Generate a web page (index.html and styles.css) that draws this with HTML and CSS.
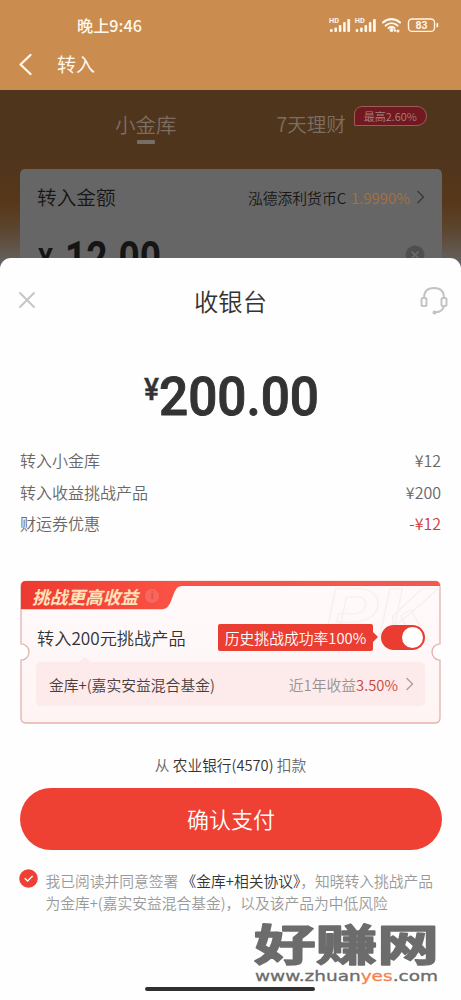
FILE: index.html
```
<!DOCTYPE html>
<html lang="zh-CN">
<head>
<meta charset="utf-8">
<title>收银台</title>
<link rel="stylesheet" href="styles.css">
</head>
<body>
<div class="screen">
  <header class="top">
    <div class="status">
      <span class="time">晚上9:46</span>
      <svg class="status-icons" width="112" height="20" viewBox="0 0 112 20">
        <g fill="#fff6ea">
          <g id="signal">
            <text x="1" y="8" class="hd" textLength="10" lengthAdjust="spacingAndGlyphs">HD</text>
            <rect x="2" y="14" width="2.6" height="3" rx="1"/>
            <rect x="6.4" y="12.4" width="2.6" height="4.6" rx="1"/>
            <rect x="10.8" y="10" width="2.6" height="7" rx="1"/>
            <rect x="15.1" y="7" width="2.6" height="10" rx="1"/>
            <rect x="19.3" y="4" width="2.8" height="13" rx="1"/>
          </g>
          <use href="#signal" x="25.7"/>
          <circle cx="63.5" cy="15" r="2"/>
          <circle cx="67" cy="15.500" r="1.300"/>
          <circle cx="70" cy="16" r="1.500"/>
        </g>
        <g fill="none" stroke="#fff6ea" stroke-width="2.2" stroke-linecap="round">
          <path d="M55 7.5c5-4.600 12-4.600 17 0M57.700 10.500c3.500-3 8.300-3 11.800 0M60.600 13c1.800-1.400 4-1.400 5.800 0"/>
          <rect x="80.500" y="4" width="26" height="12.400" rx="3.500" stroke-width="1.400"/>
          <path d="M109.300 8.800v2.600" stroke-width="1.800"/>
        </g>
        <text x="87.500" y="14" class="battery" textLength="12" lengthAdjust="spacingAndGlyphs">83</text>
      </svg>
    </div>
    <div class="nav">
      <svg width="16" height="24" viewBox="0 0 16 24" fill="none" stroke="#fff8ee" stroke-width="2.300" stroke-linecap="round" stroke-linejoin="round"><path d="M12.500 3L2.500 12.500 12.500 22"/></svg>
      <h1>转入</h1>
    </div>
  </header>
  <main class="backdrop">
    <div class="tabs">
      <span class="tab active">小金库</span>
      <span class="tab second">7天理财</span>
      <span class="bubble">最高2.60%</span>
    </div>
    <section class="amount-card">
      <div class="amount-head">
        <span class="label">转入金额</span>
        <span class="fund">泓德添利货币C</span>
        <span class="rate">1.9990%</span>
        <svg width="10" height="16" viewBox="0 0 10 16" fill="none" stroke="#3c3c3c" stroke-width="1.500"><path d="M1.500 2l6 6-6 6"/></svg>
      </div>
      <div class="amount-row">
        <svg width="130" height="50" viewBox="0 0 130 50" fill="#151515">
          <text x="1" y="37" class="yen-small" textLength="15" lengthAdjust="spacingAndGlyphs">¥</text>
          <text x="28" y="41" class="num-small" textLength="96" lengthAdjust="spacingAndGlyphs">12.00</text>
        </svg>
        <svg width="20" height="20" viewBox="0 0 20 20"><circle cx="10" cy="10" r="9.500" fill="#4f4f4f"/><path d="M6.500 6.500l7 7M13.500 6.500l-7 7" stroke="#696969" stroke-width="1.800"/></svg>
      </div>
    </section>
  </main>

  <section class="sheet">
    <div class="sheet-head">
      <svg width="18" height="18" viewBox="0 0 18 18" stroke="#c6c6c6" stroke-width="2" stroke-linecap="round"><path d="M2 2l14 14M16 2L2 16"/></svg>
      <h2>收银台</h2>
      <svg width="28" height="29" viewBox="0 0 28 29" fill="none" stroke="#c3c3c3" stroke-width="2" stroke-linecap="round"><path d="M4 12C4 5 8 2 14 2s10 3 10 10M24 20c-1 4-4 6-8 6.300"/><rect x="1.500" y="12" width="5" height="8" rx="1.500"/><rect x="21.500" y="12" width="5" height="8" rx="1.500"/><circle cx="14.500" cy="26.500" r="1" fill="#c3c3c3"/></svg>
    </div>
    <svg class="total" width="190" height="66" viewBox="0 -8 190 66">
      <text x="3" y="28.500" class="yen-big" textLength="15" lengthAdjust="spacingAndGlyphs">¥</text>
      <text x="18" y="43.500" class="num-big" textLength="160" lengthAdjust="spacingAndGlyphs">200.00</text>
    </svg>
    <ul class="lines">
      <li><span>转入小金库</span><span>¥12</span></li>
      <li><span>转入收益挑战产品</span><span>¥200</span></li>
      <li><span>财运券优惠</span><span class="minus">-¥12</span></li>
    </ul>

    <section class="challenge">
      <svg class="frame" width="421" height="145" viewBox="0 0 421 144" preserveAspectRatio="none">
        <defs>
          <linearGradient id="cardFill" x1="0" y1="0" x2="0" y2="1"><stop offset="0" stop-color="#fffafa"/><stop offset="1" stop-color="#fef4f4"/></linearGradient>
          <linearGradient id="bar" x1="0" y1="0" x2="1" y2="0"><stop offset="0" stop-color="#ed3a30"/><stop offset=".35" stop-color="#fa5145"/><stop offset="1" stop-color="#f25a50"/></linearGradient>
        </defs>
        <path d="M6 1.500H415Q420 1.500 420 6.500V63.500A8 8 0 0 0 420 79.500V137Q420 142 415 142H6Q1 142 1 137V79.500A8 8 0 0 0 1 63.500V6.500Q1 1.500 6 1.500Z" fill="url(#cardFill)" stroke="#e3b1ae" stroke-width="1.300"/>
        <text x="304" y="60" class="pk" textLength="108" lengthAdjust="spacingAndGlyphs">PK</text>
        <path d="M1 29V6Q1 1 6 1H415Q420 1 420 6H163C158 6 156.500 8 154.500 12L150.500 22C148 27 146 29 140 29Z" fill="url(#bar)"/>
      </svg>
      <div class="challenge-title"><span>挑战更高收益</span><i class="info">i</i></div>
      <div class="challenge-row">
        <span class="product">转入200元挑战产品</span>
        <span class="flag">历史挑战成功率100%</span>
        <span class="toggle"></span>
      </div>
      <div class="fund-row">
        <span class="fund-name">金库+(嘉实安益混合基金)</span>
        <span class="gain">近1年收益<b>3.50%</b></span>
        <svg width="9" height="14" viewBox="0 0 9 14" fill="none" stroke="#aaa0a0" stroke-width="1.400"><path d="M1.500 1l6 6-6 6"/></svg>
      </div>
    </section>

    <p class="source">从 <b>农业银行(4570)</b> 扣款</p>
    <button class="pay">确认支付</button>
    <div class="terms">
      <svg width="19" height="19" viewBox="0 0 19 19"><circle cx="9.500" cy="9.500" r="9.300" fill="#ee4035"/><path d="M5.700 9.200l2.900 2.800 5-5" fill="none" stroke="#fff" stroke-width="1.400"/></svg>
      <p><span class="term-line">我已阅读并同意签署 <b>《金库+相关协议》</b>，知晓转入挑战产品</span><span class="term-line">为金库+(嘉实安益混合基金)，以及该产品为中低风险</span></p>
    </div>
  </section>

  <div class="home-bar"></div>
  <svg class="stamp" width="190" height="82" viewBox="0 -14 190 82">
    <text x="3" y="43" class="stamp-name" textLength="185" lengthAdjust="spacingAndGlyphs">好赚网</text>
    <text x="4" y="62.500" class="stamp-url" textLength="183" lengthAdjust="spacingAndGlyphs">www.zhuan<tspan fill="#f4834f" stroke="#f4834f">yes</tspan>.com</text>
  </svg>
</div>
</body>
</html>
```
FILE: styles.css
```
* { box-sizing: border-box; margin: 0; padding: 0; }
body { font-family: "Noto Sans CJK SC", "Noto Sans", sans-serif; font-weight: 350; color: #333; }
h1, h2, b { font-weight: 350; }
.screen { position: relative; width: 461px; height: 1000px; overflow: hidden; background: #fefefe; }

.top { height: 90px; background: #cb8c4f; color: #fff8ee; }
.status { height: 50px; padding: 0 21px 0 77px; display: flex; align-items: center; justify-content: space-between; }
.time { font-size: 16.200px; font-weight: 500; white-space: nowrap; }
.hd { font: 700 6.500px Roboto, sans-serif; }
.battery { font: 700 11px Roboto, sans-serif; fill: #fff6ea; }
.nav { height: 28px; padding-left: 18px; display: flex; align-items: center; gap: 23px; }
.nav h1 { font-size: 19px; line-height: 28px; font-weight: 400; }

.backdrop { height: 190px; padding: 0 19px 0 20px; background: linear-gradient(#50351d 0, #50351d 70px, #573719 112px, #5c4630 140px, #666 178px); }
.tabs { height: 79px; padding: 18px 0 0 95px; display: flex; align-items: flex-start; color: #7c6e61; }
.tab { font-size: 20.500px; line-height: 32px; white-space: nowrap; }
.active::after { content: ""; display: block; width: 18px; height: 3.500px; margin: 0 auto; border-radius: 1px; background: #776e66; }
.second { margin-left: 100px; font-size: 19.500px; }
.bubble { margin: -2px 0 0 8px; width: 73px; height: 20px; border: 1px solid #986052; border-radius: 8px 10px 10px 1px; background: #711820; color: #aa817b; font-size: 11px; line-height: 18px; text-align: center; white-space: nowrap; }
.amount-card { height: 120px; border-radius: 5px; background: #666; color: #171717; }
.amount-head { height: 56px; padding: 0 16px 0 17px; display: flex; align-items: center; font-size: 14.800px; white-space: nowrap; }
.label { font-size: 19.700px; margin: -2px auto 0 0; }
.rate { margin: 0 6px 0 5px; color: #a9703f; font-size: 15px; }
.amount-row { display: flex; justify-content: space-between; padding: 7px 17px 0 17px; }
.amount-row svg:last-child { margin-top: 13px; }
.num-small { font: 700 44px Roboto, sans-serif; }
.yen-small { font: 700 29px Roboto, sans-serif; }

.sheet { position: absolute; left: 0; top: 258px; width: 461px; height: 742px; padding: 0 20px; border-radius: 11px 11px 0 0; background: #fefefe; }
.sheet-head { height: 84px; margin: 0 -7px 0 -2px; display: flex; align-items: center; justify-content: space-between; }
.sheet-head h2 { font-size: 24.300px; line-height: 36px; margin-top: 1px; margin-right: -5px; }
.total { display: block; margin: 21px 0 0 121px; fill: #333; }
.num-big { font: 500 54px Roboto, sans-serif; stroke: #333; stroke-width: 1px; stroke-linejoin: round; }
.yen-big { font: 500 31px Roboto, sans-serif; stroke: #333; stroke-width: .4px; }
.lines { list-style: none; margin-top: 16px; color: #686868; font-size: 16px; }
.lines li { display: flex; justify-content: space-between; height: 31.500px; line-height: 31.500px; }
.lines .minus { color: #cf3c37; }

.challenge { position: relative; width: 421px; height: 145px; margin-top: 40.500px; }
.frame { position: absolute; inset: 0; }
.pk { font: italic 700 72px Roboto, sans-serif; fill: none; stroke: #f8efef; stroke-width: 1.200px; }
.challenge-title { position: relative; height: 32px; padding: 0 0 1px 12px; display: flex; align-items: center; gap: 7px; }
.challenge-title span { color: #ffe2ba; font-size: 17.700px; font-weight: 700; font-style: italic; line-height: 28px; }
.info { width: 14px; height: 14px; border-radius: 50%; background: #f6675c; color: #ed4d42; font: 700 11px/14px Roboto, sans-serif; text-align: center; }
.challenge-row { position: relative; height: 50px; padding: 0 16px 0 17px; display: flex; align-items: center; white-space: nowrap; }
.product { font-size: 17.200px; margin-right: auto; }
.flag { position: relative; width: 155px; height: 27px; border-radius: 2px; background: #eb3e32; color: #fff; font-size: 14.800px; line-height: 27px; text-align: center; }
.flag::after { content: ""; position: absolute; right: -5px; top: 8px; border: solid transparent; border-width: 5px 0 5px 5px; border-left-color: #eb3e32; }
.toggle { width: 44px; height: 25px; margin-left: 8px; padding: 2px; border-radius: 13px; background: #e93d32; display: flex; justify-content: flex-end; }
.toggle::after { content: ""; width: 21px; height: 21px; border-radius: 50%; background: #fff; }
.fund-row { position: relative; height: 44px; margin: 0 16px; padding: 0 11px 0 13px; border-radius: 5px; background: #fdeaea; display: flex; align-items: center; white-space: nowrap; font-size: 14.800px; }
.fund-row::before { content: ""; position: absolute; left: 43px; top: -5px; border: solid transparent; border-width: 0 6px 5px; border-bottom-color: #fdeaea; }
.fund-name { margin-right: auto; color: #493d3d; }
.gain { color: #9a9292; margin-right: 7px; }
.gain b { color: #c94842; }

.source { margin-top: 28px; font-size: 14.700px; line-height: 24px; text-align: center; color: #666; }
.source b { color: #333; }
.pay { display: block; width: 422px; height: 62px; margin-top: 11px; border: 0; border-radius: 31px; background: #ee4033; color: #fff; font: 350 22px/60px "Noto Sans CJK SC", sans-serif; padding-bottom: 2px; }
.terms { margin: 20px 0 0 -1px; display: flex; gap: 7.500px; }
.terms svg { flex: none; margin-top: -1px; }
.terms p { font-size: 14.750px; line-height: 22px; color: #999; white-space: nowrap; }
.term-line { display: block; }
.terms b { color: #333; }

.home-bar { position: absolute; left: 145px; top: 987px; width: 170px; height: 4px; border-radius: 2px; background: #303030; }
.stamp { position: absolute; left: 251px; top: 904px; }
.stamp-name { font: 700 43px "Noto Sans CJK SC", sans-serif; fill: #6c6c6c; stroke: #6c6c6c; stroke-width: 1.500px; stroke-linejoin: round; }
.stamp-url { font: 400 14px "DejaVu Sans", sans-serif; fill: #6c6c6c; stroke: #6c6c6c; stroke-width: .3px; }
```
